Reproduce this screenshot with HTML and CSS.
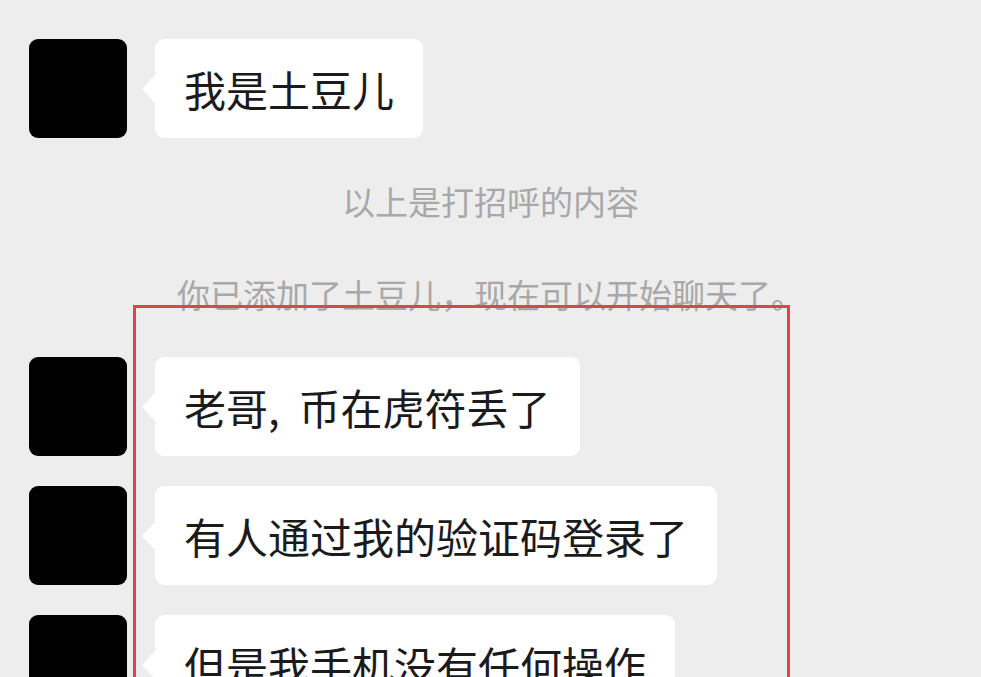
FILE: index.html
```html
<!DOCTYPE html>
<html lang="zh-CN">
<head>
<meta charset="UTF-8">
<meta name="viewport" content="width=device-width, initial-scale=1.0">
<title>聊天</title>
<link rel="stylesheet" href="styles.css">
</head>
<body>

<div class="chat">
    <div class="msg">
        <div class="avatar"></div>
        <div class="bubble">我是土豆儿</div>
    </div>

    <div class="notes">
        <p class="note">以上是打招呼的内容</p>
        <p class="note">你已添加了土豆儿，现在可以开始聊天了。</p>
    </div>

    <div class="msg">
        <div class="avatar"></div>
        <div class="bubble">老哥,&nbsp; 币在虎符丢了</div>
    </div>
    <div class="msg">
        <div class="avatar"></div>
        <div class="bubble">有人通过我的验证码登录了</div>
    </div>
    <div class="msg">
        <div class="avatar"></div>
        <div class="bubble">但是我手机没有任何操作</div>
    </div>
</div>

<!-- red highlight frame drawn over the messages -->
<div class="highlight"></div>

</body>
</html>
```

FILE: styles.css
```css
html {
    overflow: hidden;
}

body {
    margin: 0;
    background-color: #ededed;
    font-family: "Noto Sans CJK SC", "Noto Sans", sans-serif;
    color: #1b1b1b;
}

.chat {
    padding: 39px 0 0 29px;
}

.msg {
    display: flex;
    align-items: flex-start;
    gap: 28px;
    margin-bottom: 30px;
}

.avatar {
    flex: none;
    width: 98px;
    height: 99px;
    background-color: #000;
    border-radius: 9px;
}

.bubble {
    position: relative;
    display: flex;
    align-items: center;
    height: 99px;
    padding: 0 29px;
    background-color: #fff;
    border-radius: 9px;
    font-size: 42px;
    white-space: nowrap;
}

.bubble::before {
    content: "";
    position: absolute;
    left: -13px;
    top: 36px;
    border-style: solid;
    border-width: 14px 13px 14px 0;
    border-color: transparent #fff transparent transparent;
}

.notes {
    margin: 40px 0 40px -29px;
}

.note {
    margin: 0 0 47px;
    line-height: 46px;
    font-size: 33px;
    color: #a8a8a8;
    text-align: center;
}

.note:last-child {
    margin-bottom: 0;
}

.highlight {
    position: absolute;
    left: 133px;
    top: 305px;
    width: 651px;
    height: 500px;
    border: 3px solid #dc4549;
}
```
